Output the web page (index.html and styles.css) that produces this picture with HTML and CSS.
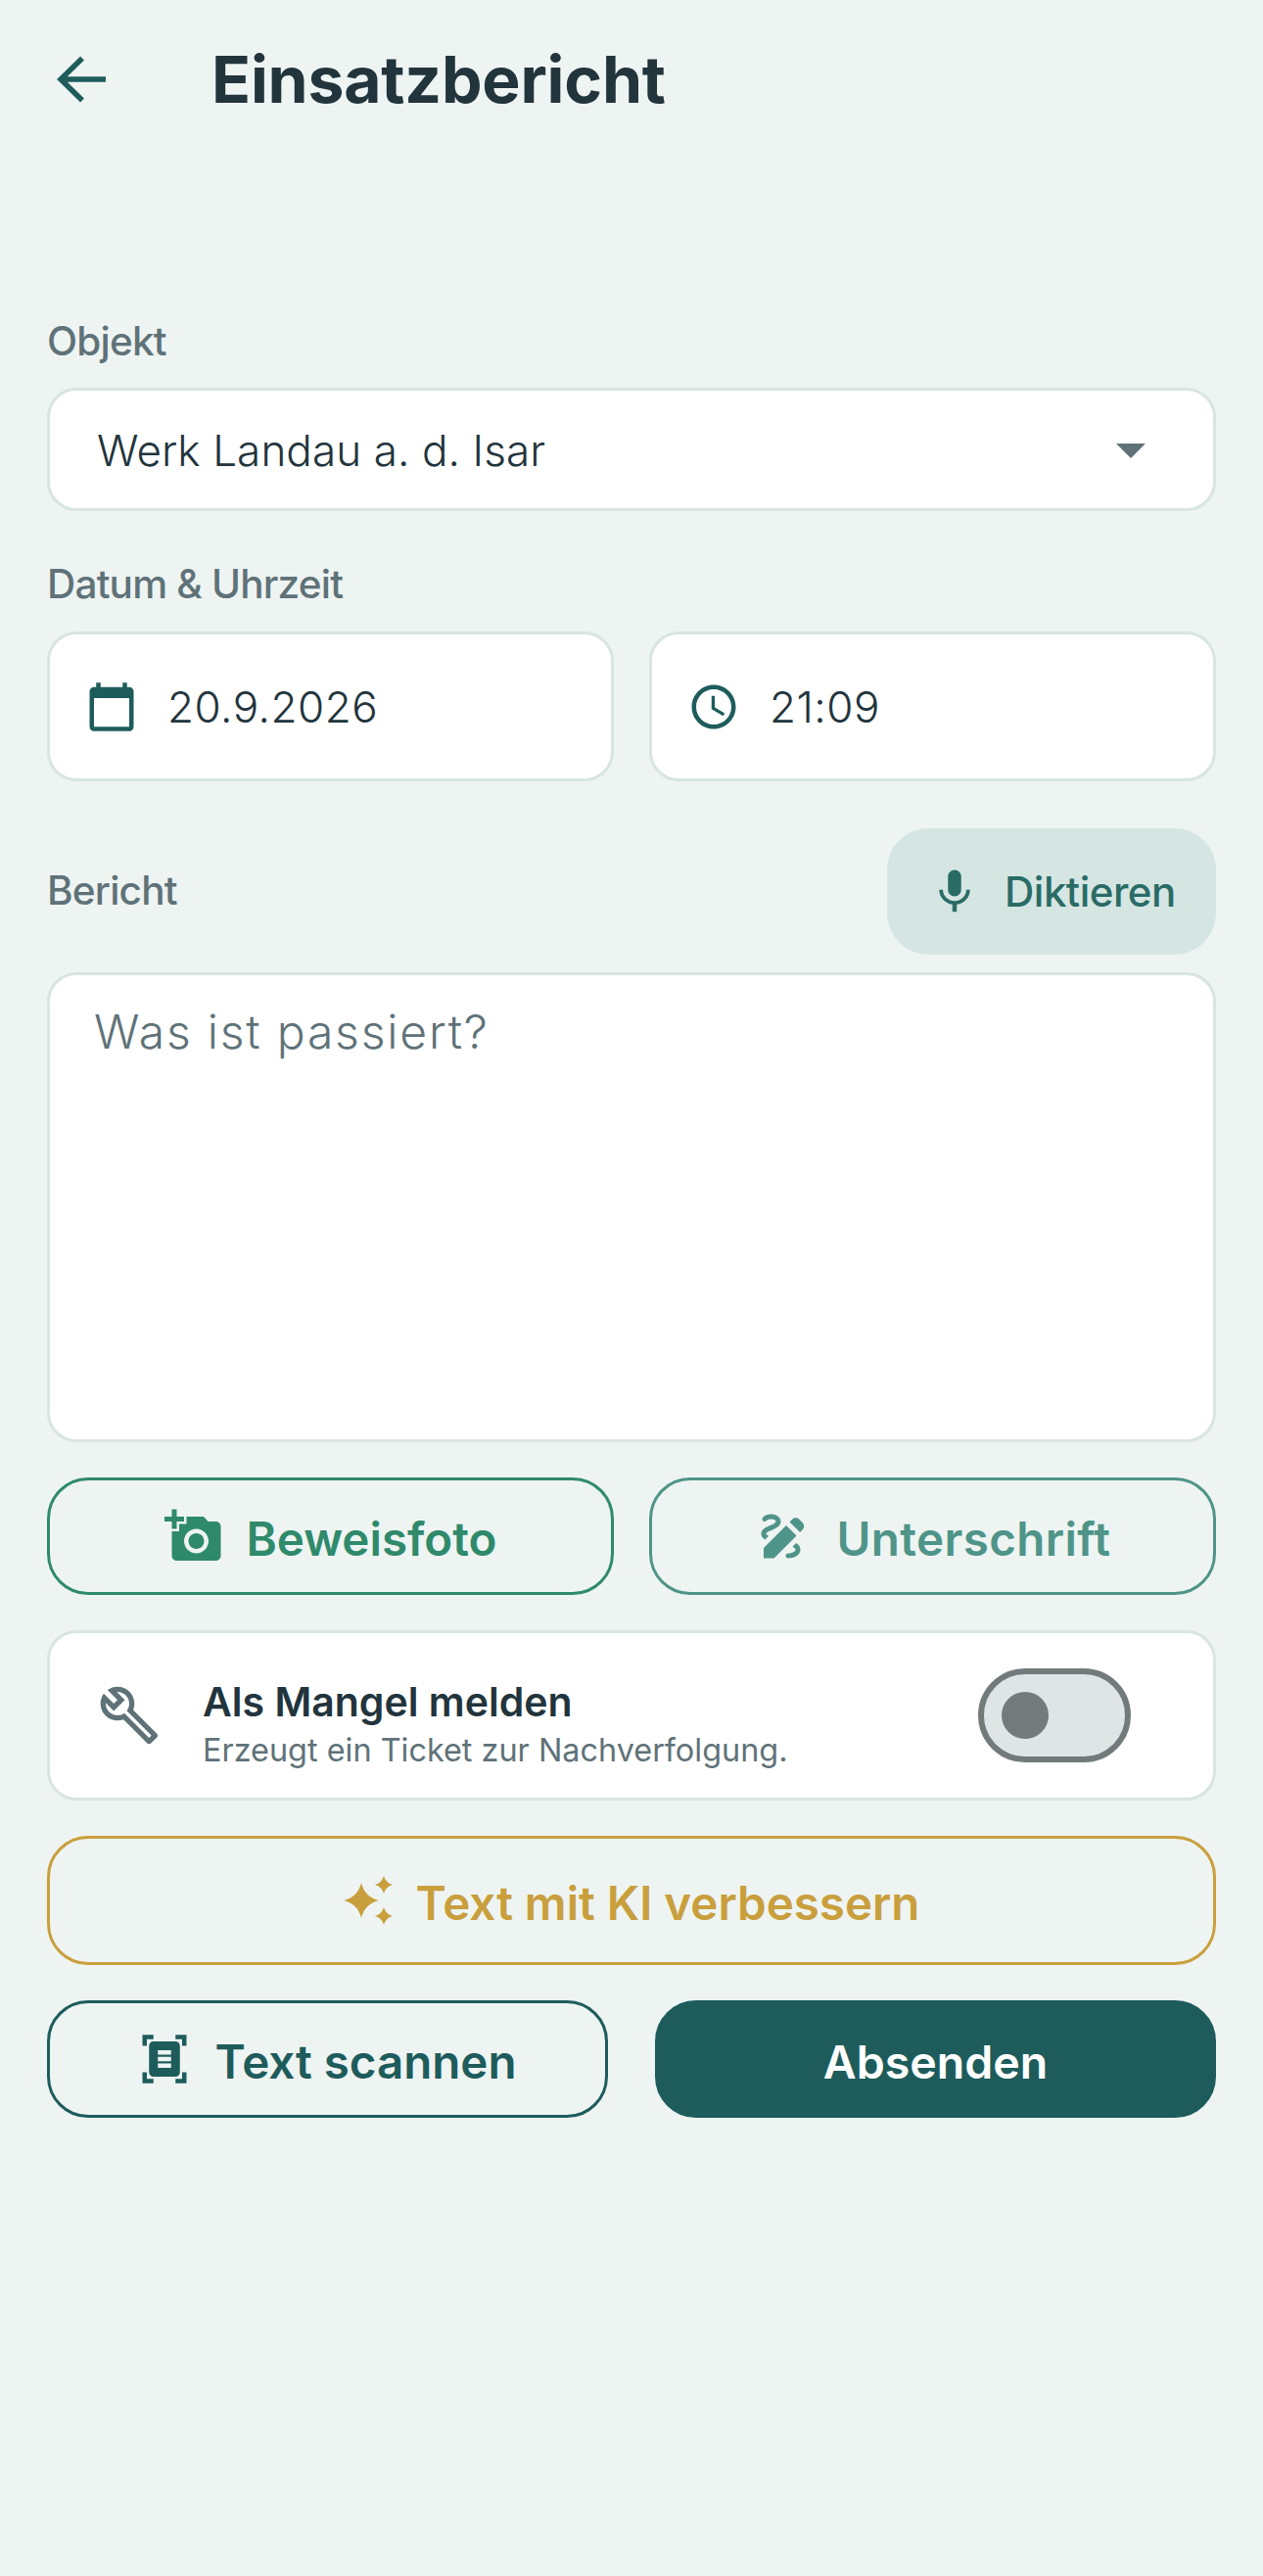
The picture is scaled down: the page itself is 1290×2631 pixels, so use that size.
FILE: index.html
```html
<!DOCTYPE html>
<html lang="de">
<head>
<meta charset="utf-8">
<title>Einsatzbericht</title>
<link rel="stylesheet" href="styles.css">
</head>
<body>
<main class="page">
  <header class="topbar">
    <svg class="icon-back" viewBox="0 0 72 72"><path d="M36 14.5 14 36l22 21.500M14 36h46"/></svg>
    <h1 class="title">Einsatzbericht</h1>
  </header>

  <div class="label label-first">Objekt</div>
  <div class="field select">
    <span class="field-text select-text">Werk Landau a. d. Isar</span>
    <svg class="icon-drop" viewBox="0 0 24 24"><path d="M7 10l5 5 5-5z"/></svg>
  </div>

  <div class="label label-second">Datum &amp; Uhrzeit</div>
  <div class="two-col">
    <div class="field picker">
      <svg class="icon-picker" viewBox="0 0 24 24"><path d="M20 3h-1V1h-2v2H7V1H5v2H4c-1.100 0-2 .9-2 2v16c0 1.100.9 2 2 2h16c1.100 0 2-.9 2-2V5c0-1.100-.9-2-2-2zm0 18H4V8h16v13z"/></svg>
      <span class="field-text">20.9.2026</span>
    </div>
    <div class="field picker">
      <svg class="icon-picker" viewBox="0 0 24 24"><path d="M11.990 2C6.470 2 2 6.480 2 12s4.470 10 9.990 10C17.520 22 22 17.520 22 12S17.520 2 11.990 2zM12 20c-4.420 0-8-3.580-8-8s3.580-8 8-8 8 3.580 8 8-3.580 8-8 8zm.5-13H11v6l5.250 3.150.75-1.230-4.500-2.670z"/></svg>
      <span class="field-text">21:09</span>
    </div>
  </div>

  <div class="report-head">
    <div class="label label-report">Bericht</div>
    <button class="dictate">
      <svg class="icon-mic" viewBox="0 0 24 24"><path d="M12 14c1.660 0 2.990-1.340 2.990-3L15 5c0-1.660-1.340-3-3-3S9 3.340 9 5v6c0 1.660 1.340 3 3 3zm5.300-3c0 3-2.540 5.100-5.300 5.100S6.700 14 6.700 11H5c0 3.410 2.720 6.230 6 6.720V21h2v-3.280c3.280-.48 6-3.300 6-6.720h-1.700z"/></svg>
      <span>Diktieren</span>
    </button>
  </div>
  <div class="field report-area">Was ist passiert?</div>

  <div class="stack">
    <div class="two-col">
      <button class="btn btn-photo">
        <svg class="icon-btn" viewBox="0 0 24 24"><path d="M3 4V1h2v3h3v2H5v3H3V6H0V4h3zm3 6V7h3V4h7l1.830 2H21c1.100 0 2 .9 2 2v12c0 1.100-.9 2-2 2H5c-1.100 0-2-.9-2-2V10h3zm7 9c2.760 0 5-2.240 5-5s-2.240-5-5-5-5 2.240-5 5 2.240 5 5 5zm-3.200-5c0 1.770 1.430 3.200 3.200 3.200s3.200-1.430 3.200-3.200-1.430-3.200-3.200-3.200-3.200 1.430-3.200 3.200z"/></svg>
        <span>Beweisfoto</span>
      </button>
      <button class="btn btn-sign">
        <svg class="icon-btn" viewBox="0 0 24 24"><path d="M18.850 10.390l1.060-1.060c.78-.78.78-2.050 0-2.830L18.500 5.090c-.78-.78-2.050-.78-2.830 0l-1.060 1.060 4.240 4.240zm-5.660-2.830L4 16.760V21h4.240l9.190-9.190-4.240-4.250zM19 17.500c0 2.190-2.540 3.500-5 3.500-.55 0-1-.45-1-1s.45-1 1-1c1.540 0 3-.73 3-1.500 0-.47-.48-.87-1.230-1.200l1.480-1.480c1.070.63 1.750 1.470 1.750 2.680zM4.580 13.350C3.610 12.790 3 12.060 3 11c0-1.800 1.890-2.630 3.560-3.360C7.590 7.180 9 6.560 9 6c0-.41-.78-1-2-1-1.260 0-1.800.61-1.830.64-.35.41-.98.46-1.400.12-.41-.34-.49-.95-.15-1.380C3.730 4.240 4.760 3 7 3s4 1.320 4 3c0 1.870-1.930 2.720-3.640 3.470C6.420 9.880 5 10.500 5 11c0 .31.43.6 1.070.86l-1.490 1.490z"/></svg>
        <span>Unterschrift</span>
      </button>
    </div>

    <div class="field defect">
      <svg class="icon-wrench" viewBox="0 0 24 24"><path d="M22.610 18.990l-9.080-9.080c.93-2.340.45-5.100-1.440-7C9.790.61 6.210.4 3.660 2.260L7.500 6.110 6.080 7.520 2.250 3.690C.39 6.230.6 9.820 2.900 12.110c1.860 1.860 4.570 2.350 6.890 1.480l9.110 9.110c.39.39 1.020.39 1.410 0l2.300-2.300c.4-.38.4-1.010 0-1.410zm-3 1.600l-9.460-9.460c-.61.45-1.290.72-2 .82-1.360.2-2.790-.21-3.830-1.250C3.370 9.760 2.930 8.500 3 7.260l3.090 3.090 4.240-4.240-3.090-3.090c1.240-.07 2.490.37 3.440 1.310 1.080 1.080 1.490 2.570 1.240 3.960-.12.71-.42 1.370-.88 1.960l9.450 9.450-.88.88z"/></svg>
      <div class="defect-text">
        <div class="defect-title">Als Mangel melden</div>
        <div class="defect-sub">Erzeugt ein Ticket zur Nachverfolgung.</div>
      </div>
      <div class="toggle"><span class="knob"></span></div>
    </div>

    <button class="btn btn-ai">
      <svg class="icon-spark" viewBox="0 0 50 50"><path d="M18 7Q21.500 21.500 36 25 21.500 28.500 18 43 14.500 28.500 0 25 14.500 21.500 18 7zM41 0Q43 7 50 9 43 11 41 18 39 11 32 9 39 7 41 0zM41 32Q43 39 50 41 43 43 41 50 39 43 32 41 39 39 41 32z"/></svg>
      <span>Text mit KI verbessern</span>
    </button>

    <div class="actions">
      <button class="btn btn-scan">
        <svg class="icon-scan" viewBox="0 0 24 24"><path fill-rule="evenodd" d="M7 3H4v3H2V1h5v2zm15 3V1h-5v2h3v3h2zM7 21H4v-3H2v5h5v-2zm13-3v3h-3v2h5v-5h-2zM19 18c0 1.100-.9 2-2 2H7c-1.100 0-2-.9-2-2V6c0-1.100.9-2 2-2h10c1.100 0 2 .9 2 2v12zM15 8H9v2h6V8zm0 3H9v2h6v-2zm0 3H9v2h6v-2z"/></svg>
        <span>Text scannen</span>
      </button>
      <button class="btn btn-send"><span>Absenden</span></button>
    </div>
  </div>
</main>
</body>
</html>
```

FILE: styles.css
```css
* { box-sizing: border-box; }
html, body { margin: 0; padding: 0; }
body {
  width: 1290px;
  min-height: 2631px;
  background: #eef4f2;
  font-family: Inter, "Noto Sans", sans-serif;
  color: #22343c;
}
.page { padding: 0 48px; }
button { font-family: inherit; background: none; cursor: pointer; padding: 0; }
svg { display: block; flex: none; }

.topbar { height: 162px; display: flex; align-items: center; }
.icon-back { width: 72px; height: 72px; fill: none; stroke: #1e5c5c; stroke-width: 5.5; }
.title {
  margin: 0 0 0 96px;
  font-size: 66px;
  font-weight: 700;
  letter-spacing: -0.2px;
  line-height: 72px;
  color: #22343c;
}

.label {
  font-size: 40.500px;
  font-weight: 500;
  letter-spacing: -0.8px;
  line-height: 60px;
  color: #5f7278;
}
.label-first { margin-top: 157px; margin-bottom: 17px; }
.label-second { margin-top: 45px; margin-bottom: 18px; }
.label-report { margin-top: -2px; }

.field {
  background: #fff;
  border: 3px solid #d8e5e1;
  border-radius: 30px;
}
.field-text { font-size: 44px; font-weight: 350; line-height: 60px; letter-spacing: 0.5px; color: #22343c; }
.select {
  height: 126px;
  padding: 0 48px;
  display: flex;
  align-items: center;
  justify-content: space-between;
}
.select-text { letter-spacing: 0.1px; padding-top: 2px; }
.icon-drop { width: 72px; height: 72px; fill: #5f7278; }

.two-col { display: grid; grid-template-columns: 1fr 1fr; column-gap: 36px; }
.picker {
  height: 153px;
  padding: 0 36px;
  display: flex;
  align-items: center;
  gap: 30px;
}
.icon-picker { width: 54px; height: 54px; fill: #1e5c5c; }

.report-head {
  margin-top: 48px;
  height: 129px;
  display: flex;
  align-items: center;
  justify-content: space-between;
}
.dictate {
  width: 336px;
  height: 129px;
  border: 0;
  border-radius: 42px;
  background: #d5e6e2;
  display: flex;
  align-items: center;
  padding-left: 42px;
  gap: 24px;
  font-size: 42px;
  font-weight: 500;
  letter-spacing: -0.5px;
  color: #2a6b66;
}
.icon-mic { width: 54px; height: 54px; fill: #2a6b66; }
.report-area {
  margin-top: 18px;
  height: 480px;
  padding: 26px 45px;
  font-size: 48px;
  font-weight: 350;
  letter-spacing: 1.800px;
  line-height: 64px;
  color: #5f7278;
}

.stack { margin-top: 36px; display: flex; flex-direction: column; gap: 36px; }
.btn {
  height: 120px;
  border: 3px solid currentColor;
  border-radius: 42px;
  display: flex;
  align-items: center;
  justify-content: center;
  gap: 24px;
  font-size: 47.500px;
  font-weight: 600;
}
.btn span { padding-top: 5px; }
.icon-btn { width: 60px; height: 60px; fill: currentColor; }
.btn-photo { color: #2f8a6b; }
.btn-sign { color: #4f9488; letter-spacing: 0.4px; }

.defect {
  height: 174px;
  padding: 0 84px 0 49px;
  display: flex;
  align-items: center;
}
.icon-wrench { width: 64px; height: 64px; fill: #5f7278; }
.defect-text { margin-left: 43px; padding-top: 18px; flex: 1; }
.defect-title { font-size: 41px; font-weight: 600; line-height: 54px; color: #22343c; }
.defect-sub { font-size: 32.400px; line-height: 46px; color: #5f7278; }
.toggle {
  width: 156px;
  height: 96px;
  border: 6px solid #727a7c;
  border-radius: 48px;
  background: #dfe5e4;
  display: flex;
  align-items: center;
  padding-left: 18px;
}
.knob { width: 48px; height: 48px; border-radius: 50%; background: #727a7c; }

.btn-ai { height: 132px; color: #c99f3d; }
.icon-spark { width: 50px; height: 50px; fill: currentColor; }
.actions { display: grid; grid-template-columns: 1fr 1fr; column-gap: 48px; }
.btn-scan { color: #1e5c5c; }
.icon-scan { width: 54px; height: 54px; fill: currentColor; }
.btn-send { background: #1e5c5c; border-color: #1e5c5c; color: #fff; font-size: 46.500px; }
```
